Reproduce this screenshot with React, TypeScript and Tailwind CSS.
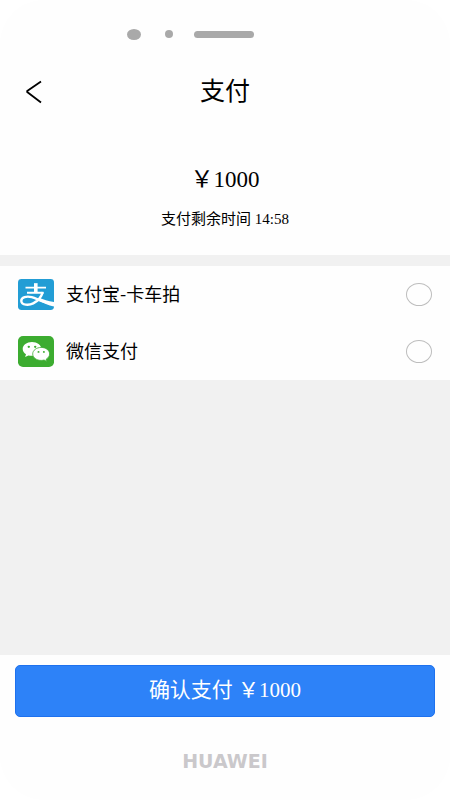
import { useState } from "react";

function AlipayIcon() {
  return (
    <svg viewBox="0 0 36 32" preserveAspectRatio="none" className="h-[31px] w-9" fill="none" stroke="#fff" aria-hidden="true">
      <rect width="36" height="32" rx="3.500" fill="#229dd5" stroke="none" />
      <path d="M7.500 8.900h20.500M9 14.100h16.500" strokeWidth="2" />
      <path d="M17.800 4.300v10" strokeWidth="3.600" />
      <path
        d="M24.800 13.600c-1.600 5.400-5.200 9.400-9.600 11.600-4.300 2.100-11.600 2-11.900-2.500-.2-4 5.500-5.400 10.400-3.900 5.500 1.700 11.800 5.400 21.600 7.300"
        strokeWidth="2.400"
      />
      <path d="M21 19.400c4.500 2 9 3.400 15 4.300v4.800c-5.600-1.600-10.800-3.700-16-6.400z" fill="#fff" stroke="none" />
    </svg>
  );
}

function WechatIcon() {
  return (
    <svg viewBox="0 0 36 32" preserveAspectRatio="none" className="h-[31px] w-9" aria-hidden="true">
      <rect width="36" height="32" rx="5" fill="#3cac30" />
      <path
        d="M14 6.200c-5.200 0-9.300 3.200-9.300 7.200 0 2.300 1.300 4.200 3.300 5.500l-.9 2.800 3.300-1.700c1.100.3 2.300.5 3.600.5 5.200 0 9.300-3.200 9.300-7.100s-4.100-7.200-9.300-7.200z"
        fill="#fff"
      />
      <path
        d="M23.200 11.800c-4.700 0-8.500 3-8.500 6.700s3.800 6.700 8.500 6.700c1 0 2-.2 2.900-.4l2.800 1.500-.7-2.400c2-1.200 3.400-3.200 3.400-5.400 0-3.700-3.700-6.700-8.400-6.700z"
        fill="#fff"
        stroke="#3cac30"
        strokeWidth="0.8"
      />
      <circle cx="10.800" cy="11.200" r="1.200" fill="#3cac30" />
      <circle cx="17.200" cy="11.200" r="1.200" fill="#3cac30" />
      <circle cx="20.500" cy="16.400" r="1" fill="#3cac30" />
      <circle cx="25.900" cy="16.400" r="1" fill="#3cac30" />
    </svg>
  );
}

const methods = [
  { id: "alipay", label: "支付宝-卡车拍", Icon: AlipayIcon },
  { id: "wechat", label: "微信支付", Icon: WechatIcon },
];

export default function App() {
  const [selected, setSelected] = useState("");

  return (
    <div className="bg-white">
      <main className="flex min-h-screen flex-col rounded-[44px] bg-[#fefefe] font-['Liberation_Serif','Noto_Sans_CJK_SC',serif] text-black">
        <div className="flex h-[68px] items-center pl-[127px]">
          <span className="h-[11px] w-3.5 rounded-[50%] bg-[#a9a9a9]" />
          <span className="ml-6 h-2 w-2 rounded-full bg-[#a9a9a9]" />
          <span className="ml-[21px] h-[7px] w-[60px] rounded-full bg-[#a9a9a9]" />
        </div>

        <header className="grid h-12 grid-cols-[1fr_auto_1fr] items-center px-6">
          <button type="button" aria-label="返回" className="w-6 cursor-pointer">
            <svg viewBox="0 0 24 24" className="h-6 w-6" fill="none" stroke="#000" strokeWidth="1.800">
              <path d="M17 1.500 3.200 11v1L17 22.500" />
            </svg>
          </button>
          <h1 className="text-[25px] leading-8">支付</h1>
        </header>

        <section className="flex flex-col items-center pt-[46px] pb-6">
          <p className="text-[23px] leading-9">￥1000</p>
          <p className="mt-[9px] text-[15px] leading-6">支付剩余时间 14:58</p>
        </section>

        <div className="h-[11px] bg-[#f1f1f1]" />

        <section>
          {methods.map(({ id, label, Icon }) => (
            <label key={id} htmlFor={id} className="flex h-[57px] cursor-pointer items-center gap-3 px-[18px]">
              <Icon />
              <span className="flex-1 pb-1 font-['Noto_Sans_CJK_SC',sans-serif] text-lg">{label}</span>
              <input
                type="radio"
                id={id}
                name="method"
                checked={selected === id}
                onChange={() => setSelected(id)}
                className="h-[23px] w-[26px] appearance-none rounded-[50%] border border-[#bdbdbd] checked:border-8 checked:border-[#2d82f8]"
              />
            </label>
          ))}
        </section>

        <div className="flex-1 bg-[#f1f1f1]" />

        <div className="px-[15px] pt-2.5">
          <button
            type="button"
            className="h-[52px] w-full cursor-pointer rounded-[5px] border border-[#1e71ee] bg-[#2d82f8] text-[21px] text-white"
          >
            确认支付 ￥1000
          </button>
        </div>

        <footer className="flex h-[83px] items-center justify-center pt-1">
          <span className="font-['DejaVu_Sans',sans-serif] text-[19px] font-bold leading-6 text-[#cac8cb]">HUAWEI</span>
        </footer>
      </main>
    </div>
  );
}
